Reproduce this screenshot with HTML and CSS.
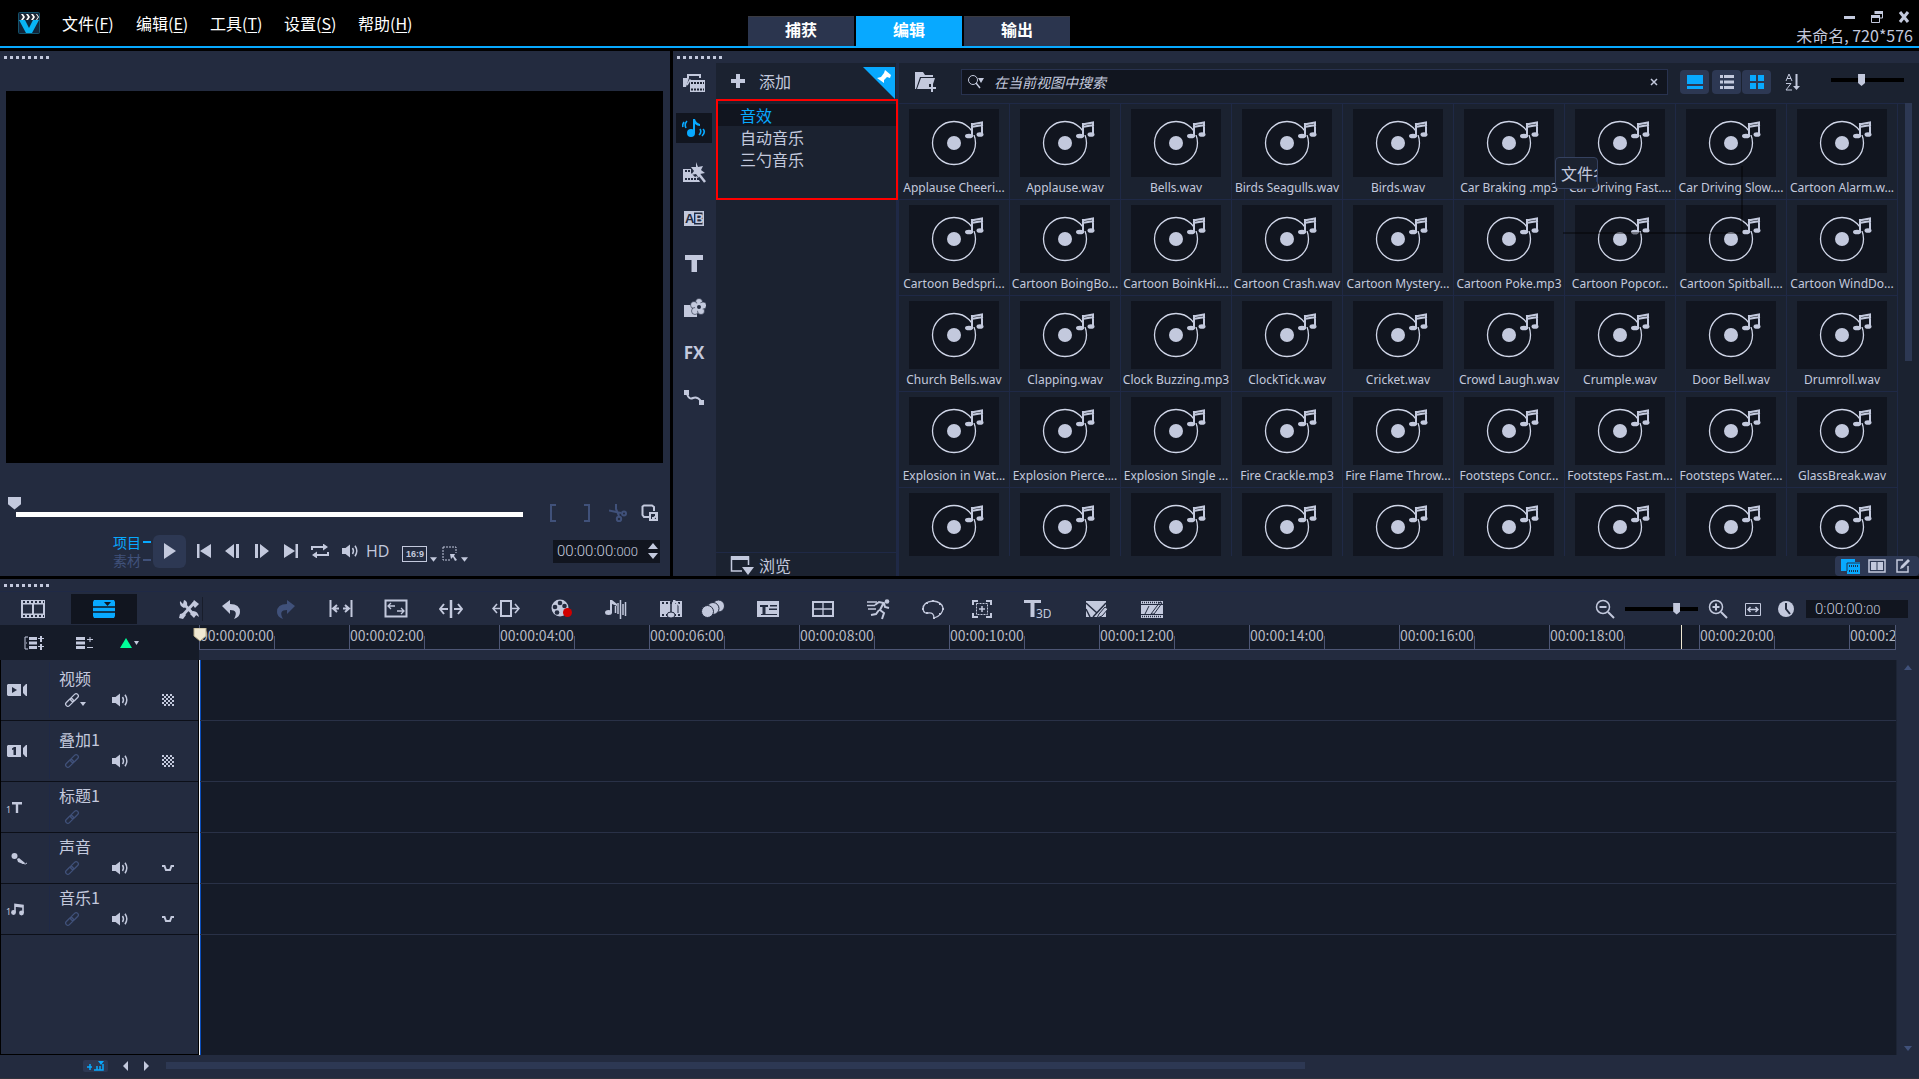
FILE: index.html
```html
<!DOCTYPE html>
<html lang="zh-CN">
<head>
<meta charset="utf-8">
<meta name="viewport" content="width=device-width, initial-scale=1">
<title>未命名, 720*576</title>
<link rel="stylesheet" href="styles.css">
</head>
<body>
<svg class="sprite" aria-hidden="true">
  <symbol id="disc" viewBox="0 0 90 68"><circle cx="45" cy="34" r="21.500" fill="none" stroke="#d0d6e8" stroke-width="1.300"/><circle cx="45" cy="34" r="7"/><path d="M64 18h8v8h-8z" fill="#11151f"/><path d="M62 15.500 73 13.500V26M63 14V28M62 18 74 16" fill="none" stroke="currentColor" stroke-width="2"/><ellipse cx="60" cy="27" rx="4" ry="2.300"/><ellipse cx="71" cy="25.500" rx="3.500" ry="2.300"/></symbol>
  <symbol id="link" viewBox="0 0 16 16"><g fill="none" stroke="currentColor" stroke-width="1.300" transform="rotate(-45 8 8)"><rect x="0" y="5.800" width="9" height="4.400" rx="2.200"/><rect x="7" y="5.800" width="9" height="4.400" rx="2.200"/></g></symbol>
  <symbol id="volume" viewBox="0 0 20 16"><path d="M2 5h3.500L10 1.500v13L5.500 11H2z"/><path d="M12.500 5q2 3 0 6M15 2.800q3.600 5.200 0 10.400" fill="none" stroke="currentColor" stroke-width="1.500"/></symbol>
  <symbol id="checker" viewBox="0 0 12 12"><path d="M0 0h2v2H0zM4 0h2v2H4zM8 0h2v2H8zM2 2h2v2H2zM6 2h2v2H6zM10 2h2v2h-2zM0 4h2v2H0zM4 4h2v2H4zM8 4h2v2H8zM2 6h2v2H2zM6 6h2v2H6zM10 6h2v2h-2zM0 8h2v2H0zM4 8h2v2H4zM8 8h2v2H8zM2 10h2v2H2zM6 10h2v2H6zM10 10h2v2h-2z"/></symbol>
  <symbol id="duck" viewBox="0 0 12 12"><path d="M0 4h2.500l1.500 4h4l1.500-4H12" fill="none" stroke="currentColor" stroke-width="2"/></symbol>
  <symbol id="caret" viewBox="0 0 6 4"><path d="M0 0h6L3 4z"/></symbol>
</svg>

<div class="app">
  <header class="topbar">
    <svg class="logo" viewBox="0 0 22 22" aria-hidden="true"><rect x=".5" y=".5" width="21" height="21" rx="1" fill="#10253a" stroke="#14526b"/><path d="M2 2h18v6H2z" fill="#222a35"/><path d="m3 2 2 3-2 3h2l2-3-2-3zM8 2l2 3-2 3h2l2-3-2-3zM13 2l2 3-2 3h2l2-3-2-3zM18 2l2 3-2 3h1l2-3-2-3z" fill="#fff"/><path d="M1 8h6l4 8 4-8h6l-7 13H8z" fill="#08b4f5"/></svg>
    <nav class="menu">
      <a href="#">文件(<u>F</u>)</a><a href="#">编辑(<u>E</u>)</a><a href="#">工具(<u>T</u>)</a><a href="#">设置(<u>S</u>)</a><a href="#">帮助(<u>H</u>)</a>
    </nav>
    <div class="tabs">
      <button>捕获</button><button class="on">编辑</button><button>输出</button>
    </div>
    <div class="window">
      <div class="window-buttons">
        <button aria-label="最小化"><svg viewBox="0 0 12 12"><path d="M0 5h11v3H0z"/></svg></button>
        <button aria-label="还原"><svg viewBox="0 0 12 12"><path d="M4 1.500h7.500V7H9" fill="none" stroke="currentColor"/><path d="M3.500 0H12v3H3.500zM0 4h9v3H0z"/><path d="M.500 5h8v6.500h-8z" fill="none" stroke="currentColor"/></svg></button>
        <button aria-label="关闭"><svg viewBox="0 0 12 12"><path d="m2 1 8 10M10 1 2 11" stroke="currentColor" stroke-width="3"/></svg></button>
      </div>
      <span>未命名, 720*576</span>
    </div>
  </header>

  <main class="upper">
    <section class="preview">
      <div class="grip"></div>
      <div class="screen"></div>
      <div class="seek">
        <input type="range" min="0" max="100" value="0" aria-label="播放位置">
        <div class="trim">
          <button aria-label="开始标记"><svg class="dim" viewBox="0 0 18 18"><path d="M11 1H6v16h5" fill="none" stroke="currentColor" stroke-width="2"/></svg></button>
          <button aria-label="结束标记"><svg class="dim" viewBox="0 0 18 18"><path d="M7 1h5v16H7" fill="none" stroke="currentColor" stroke-width="2"/></svg></button>
          <button aria-label="分割"><svg class="dim" viewBox="0 0 18 18"><g fill="none" stroke="currentColor" stroke-width="2"><path d="M7 0v5l3 7M0 6.500l12 2.500"/><circle cx="15" cy="9.500" r="2"/><circle cx="10" cy="15" r="2.200"/></g></svg></button>
          <button aria-label="放大预览"><svg viewBox="0 0 18 18"><path d="M8 13H3L1.500 11V2.500L3 1.500h8L13 3v4" fill="none" stroke="currentColor" stroke-width="2"/><path d="M9 9h7v7H9zM11 14h2l2-2v-2" fill="none" stroke="currentColor" stroke-width="2"/></svg></button>
        </div>
      </div>
      <div class="transport">
        <div class="mode"><button class="on">项目<i></i></button><button>素材<i></i></button></div>
        <button class="play" aria-label="播放"><svg viewBox="0 0 14 18"><path d="M1 1v16l12-8z"/></svg></button>
        <div class="steps">
          <button aria-label="起始"><svg viewBox="0 0 18 14"><path d="M2 0h2.500v14H2zM16 0v14L5 7z"/></svg></button>
          <button aria-label="上一帧"><svg viewBox="0 0 18 14"><path d="M10 0v14L1 7zM12 0h3v14h-3z"/></svg></button>
          <button aria-label="下一帧"><svg viewBox="0 0 18 14"><path d="M7 0v14l9-7zM2 0h3v14H2z"/></svg></button>
          <button aria-label="结束"><svg viewBox="0 0 18 14"><path d="M13.500 0H16v14h-2.500zM2 0v14l11-7z"/></svg></button>
          <button aria-label="重复"><svg viewBox="0 0 18 14"><path d="M1 6V3h12M17 8v3H5" fill="none" stroke="currentColor" stroke-width="2"/><path d="m12-.500 5 3.500-5 3.500zM6 7.500 1 11l5 3.500z"/></svg></button>
          <button aria-label="音量"><svg viewBox="0 0 20 16"><use href="#volume"/></svg></button>
        </div>
        <button class="hd">HD</button>
        <button class="ratio"><b>16:9</b><svg><use href="#caret"/></svg></button>
        <button class="pick" aria-label="变形"><svg viewBox="0 0 16 16"><path d="M1 1h13v6M1 1v13h7" fill="none" stroke="currentColor" stroke-dasharray="2 1"/><path d="M8 8h5l-1 2 3 4-2 1-2-4-2 2z"/></svg><svg><use href="#caret"/></svg></button>
        <div class="clock"><output>00:00:00:<small>000</small></output><svg viewBox="0 0 10 18"><path d="M0 7h10L5 1zM0 11h10l-5 6z"/></svg></div>
      </div>
    </section>

    <section class="library">
      <div class="grip"></div>
      <div class="library-body">
        <nav class="rail">
          <button aria-label="媒体"><svg viewBox="0 0 24 24"><path d="M5 3h14v4h-2V5H7v2L4 16H1V7h4z"/><path d="M5 14l3-5 3 2" fill="none" stroke="currentColor" stroke-width="1.500"/><path d="M8 9h15v12H8z"/><path d="M9 12h13M9 18.500h13" stroke="#1c2231" stroke-width="2" stroke-dasharray="2 1"/></svg></button>
          <button class="on" aria-label="声音"><svg viewBox="0 0 24 24"><path d="M11 3h2q1 4 5 5v2q-3 0-5-2v9h-2z"/><circle cx="9" cy="17" r="4"/><path d="M5 5q-3 3-1 7M2 6q-2 3-1 5M18 13q2 3-1 6M21 13q3 3-1 7" fill="none" stroke="currentColor" stroke-width="1.600"/></svg></button>
          <button aria-label="即时项目"><svg viewBox="0 0 24 24"><path d="M1 8h8v4l4 4 2-1 3 6H1z"/><path d="M3 10h6M3 18h14" stroke="#232b3f" stroke-width="2" stroke-dasharray="2 1"/><path d="m14 1 2 5 5-1-2 4 4 3-5 1-1 4-3-4-5 1 3-4-3-4 5 0z"/><path d="m16 12 7 9" stroke="currentColor" stroke-width="2.500"/></svg></button>
          <button aria-label="转场"><svg viewBox="0 0 24 24"><path d="M2 5h20v15H2z"/><path d="M12 6.500h8.500v12H12z" fill="#232b3f"/><text x="3" y="17" fill="#232b3f">A</text><text x="12.500" y="17">B</text></svg></button>
          <button aria-label="标题"><svg viewBox="0 0 24 24"><path d="M3 4h18v5h-6v12H9.500V9H3z"/></svg></button>
          <button aria-label="覆叠"><svg viewBox="0 0 24 24"><path d="M2 9h8v12H2zM8 17h7v4H8z"/><g stroke="#232b3f" stroke-width=".600"><circle cx="17" cy="6" r="3.500"/><circle cx="12" cy="9" r="3.500"/><circle cx="13" cy="15" r="3.500"/><circle cx="19" cy="15" r="3.500"/><circle cx="21" cy="9.500" r="3.500"/></g><circle cx="17" cy="11" r="4"/><circle cx="17" cy="11" r="2" fill="#232b3f"/></svg></button>
          <button class="fx">FX</button>
          <button aria-label="路径"><svg viewBox="0 0 24 24"><path d="M2 4h5v5H2zM17 14h5v5h-5z"/><path d="M5 8q2 6 6 4t8 3" fill="none" stroke="currentColor" stroke-width="2"/></svg></button>
        </nav>
        <aside class="folders">
          <div class="add">
            <button><svg viewBox="0 0 14 14"><path d="M5 0h4v5h5v4H9v5H5V9H0V5h5z"/></svg>添加</button>
            <svg class="pin" viewBox="0 0 32 32" aria-hidden="true"><path d="M0 0h32v32z" fill="#08a9ff"/><path d="m22 3 6 5-1 3-3-1-3 3v3l-7-5 4-1 3-4z" fill="#fff"/></svg>
          </div>
          <ul>
            <li class="on"><a href="#">音效</a></li><li><a href="#">自动音乐</a></li><li><a href="#">三勺音乐</a></li>
          </ul>
          <button class="browse"><svg viewBox="0 0 24 20"><path d="M12 16H1.500V2h17v8" fill="none" stroke="currentColor" stroke-width="1.500"/><path d="M1 1h18v4H1zM12 12h12l-6 8z"/></svg>浏览</button>
        </aside>
        <div class="content">
          <div class="filter">
            <button class="import" aria-label="导入"><svg viewBox="0 0 24 22"><path d="M1 1h8l2 3h8v2H6L2 18H1z"/><path d="M7 7h14l-2 6h-4v5H3z"/><path d="M18 13v8M14 17h8" stroke="currentColor" stroke-width="2"/></svg></button>
            <div class="search">
              <svg viewBox="0 0 18 16"><circle cx="6" cy="6" r="4.500" fill="none" stroke="currentColor"/><path d="m9 9 4 5" stroke="currentColor" stroke-width="1.500"/><path d="M11 4h6l-3 5z"/></svg>
              <input type="text" placeholder="在当前视图中搜索" aria-label="搜索">
              <button aria-label="清除"><svg viewBox="0 0 8 8"><path d="m1 1 6 6M7 1 1 7" stroke="currentColor" stroke-width="1.500"/></svg></button>
            </div>
            <div class="views">
              <button aria-label="显示"><svg viewBox="0 0 16 14"><path d="M0 0h16v9H0zM0 11h16v3H0z" fill="#08a9ff"/></svg></button>
              <div class="pair">
                <button aria-label="列表视图"><svg viewBox="0 0 16 14"><path d="M1 0h3v3H1zM5 0h10v3H5zM1 5.500h3v3H1zM5 5.500h10v3H5zM1 11h3v3H1zM5 11h10v3H5z"/></svg></button><button aria-label="缩略图视图"><svg viewBox="0 0 16 14"><path d="M1 0h6v6H1zM9 0h6v6H9zM1 8h6v6H1zM9 8h6v6H9z" fill="#08a9ff"/></svg></button>
              </div>
            </div>
            <button class="sort" aria-label="排序"><svg viewBox="0 0 16 18"><path d="m1 8 3-7 3 7M2 5.500h4M1 10.500h5L1 17h6" fill="none" stroke="currentColor"/><path d="M10.500 1h2v12h2.500l-3.500 4L8 13h2.500z"/></svg></button>
            <input class="mini" type="range" min="0" max="100" value="41" aria-label="缩略图大小">
          </div>
          <div class="gallery">
            <ul>
              <li><svg><use href="#disc"/></svg>Applause Cheeri...</li><li><svg><use href="#disc"/></svg>Applause.wav</li><li><svg><use href="#disc"/></svg>Bells.wav</li><li><svg><use href="#disc"/></svg>Birds Seagulls.wav</li><li><svg><use href="#disc"/></svg>Birds.wav</li><li><svg><use href="#disc"/></svg>Car Braking .mp3</li><li><svg><use href="#disc"/></svg>Car Driving Fast....</li><li><svg><use href="#disc"/></svg>Car Driving Slow....</li><li><svg><use href="#disc"/></svg>Cartoon Alarm.w...</li>
              <li><svg><use href="#disc"/></svg>Cartoon Bedspri...</li><li><svg><use href="#disc"/></svg>Cartoon BoingBo...</li><li><svg><use href="#disc"/></svg>Cartoon BoinkHi....</li><li><svg><use href="#disc"/></svg>Cartoon Crash.wav</li><li><svg><use href="#disc"/></svg>Cartoon Mystery...</li><li><svg><use href="#disc"/></svg>Cartoon Poke.mp3</li><li><svg><use href="#disc"/></svg>Cartoon Popcor...</li><li><svg><use href="#disc"/></svg>Cartoon Spitball....</li><li><svg><use href="#disc"/></svg>Cartoon WindDo...</li>
              <li><svg><use href="#disc"/></svg>Church Bells.wav</li><li><svg><use href="#disc"/></svg>Clapping.wav</li><li><svg><use href="#disc"/></svg>Clock Buzzing.mp3</li><li><svg><use href="#disc"/></svg>ClockTick.wav</li><li><svg><use href="#disc"/></svg>Cricket.wav</li><li><svg><use href="#disc"/></svg>Crowd Laugh.wav</li><li><svg><use href="#disc"/></svg>Crumple.wav</li><li><svg><use href="#disc"/></svg>Door Bell.wav</li><li><svg><use href="#disc"/></svg>Drumroll.wav</li>
              <li><svg><use href="#disc"/></svg>Explosion in Wat...</li><li><svg><use href="#disc"/></svg>Explosion Pierce....</li><li><svg><use href="#disc"/></svg>Explosion Single ...</li><li><svg><use href="#disc"/></svg>Fire Crackle.mp3</li><li><svg><use href="#disc"/></svg>Fire Flame Throw...</li><li><svg><use href="#disc"/></svg>Footsteps Concr...</li><li><svg><use href="#disc"/></svg>Footsteps Fast.m...</li><li><svg><use href="#disc"/></svg>Footsteps Water....</li><li><svg><use href="#disc"/></svg>GlassBreak.wav</li>
              <li><svg><use href="#disc"/></svg></li><li><svg><use href="#disc"/></svg></li><li><svg><use href="#disc"/></svg></li><li><svg><use href="#disc"/></svg></li><li><svg><use href="#disc"/></svg></li><li><svg><use href="#disc"/></svg></li><li><svg><use href="#disc"/></svg></li><li><svg><use href="#disc"/></svg></li><li><svg><use href="#disc"/></svg></li>
            </ul>
            <div class="vbar"></div>
            <div class="tip-shadow"></div>
            <div class="tip">文件名</div>
          </div>
          <div class="panels">
            <button aria-label="素材库"><svg viewBox="0 0 20 16"><path d="M0 1h14v3h5v12H6v-3H0z" fill="#08a9ff"/><path d="M6 13V5h13" fill="none" stroke="#1c3450"/><path d="M8 8h10M8 13h10" stroke="#1c3450" stroke-width="2" stroke-dasharray="1 1"/></svg></button>
            <button aria-label="选项"><svg viewBox="0 0 18 16"><path d="M1 2h16v12H1z" fill="none" stroke="currentColor" stroke-width="1.500"/><path d="M3 4h5.500v8H3zM9.500 4H15v8H9.500z"/></svg></button>
            <button aria-label="编辑"><svg viewBox="0 0 16 16"><path d="M8 2H2v12h11V8" fill="none" stroke="currentColor" stroke-width="1.500"/><path d="m5 11 1-3 7-7 2 2-7 7z"/></svg></button>
          </div>
        </div>
      </div>
    </section>
  </main>

  <section class="timeline">
    <div class="grip"></div>
    <div class="toolbar">
      <div class="mode-switch">
        <button aria-label="故事板视图"><svg viewBox="0 0 24 18"><path d="M0 0h24v18H0z"/><path d="M2 4.500h9v9H2zM13 4.500h9v9h-9z" fill="#232b3f"/><path d="M2 2h21M2 16h21" stroke="#232b3f" stroke-width="2" stroke-dasharray="2 2"/></svg></button>
        <button class="on" aria-label="时间轴视图"><svg viewBox="0 0 24 18"><path d="M2 0h20l1 2v14l-1 2H2l-1-2V2z" fill="#08a9ff"/><path d="M1 7h22M1 12h22" stroke="#11151f" stroke-width="1.500"/><path d="M12 2h7l-3.500 4z" fill="#11151f"/></svg></button>
      </div>
      <div class="tools">
        <button class="setup" aria-label="自定义工具栏"><svg viewBox="0 0 24 24"><path d="m5 19 12-13M7 7l11 12" stroke="currentColor" stroke-width="3"/><path d="M3 4l3 3 1-4q4 1 3 6L7 11Q2 9 3 4zM17 3l5 4-4 4-3-4zM16 14q5 0 6 6l-3-2-2 3-4-4zM3 17l4-1 2 2-3 4-4-1z"/></svg></button>
        <button class="near" aria-label="撤消"><svg viewBox="0 0 24 24"><path d="m3 9 8-6v4q10 0 10 8 0 5-6 7 5-9-4-9v4z"/></svg></button>
        <button aria-label="重复"><svg class="dim" viewBox="0 0 24 24"><path d="m21 9-8-6v4Q3 7 3 15q0 5 6 7-5-9 4-9v4z"/></svg></button>
        <button aria-label="滑动"><svg viewBox="0 0 24 24"><path d="M1.500 3v17M22.500 3v17M4 11.500h6M14 11.500h6M8 8l-4 3.500L8 15M16 8l4 3.500-4 3.500" fill="none" stroke="currentColor" stroke-width="2"/></svg></button>
        <button aria-label="拉伸"><svg viewBox="0 0 24 24"><path d="M1.500 3.500h21v16h-21z" fill="none" stroke="currentColor" stroke-width="2"/><path d="M11 9H4M7 6 4 9l3 3M13 14h7M17 11l3 3-3 3" fill="none" stroke="currentColor" stroke-width="1.300"/></svg></button>
        <button aria-label="卷动"><svg viewBox="0 0 24 24"><path d="M12 3v18" stroke="currentColor" stroke-width="2.500"/><path d="M9 12H1M5 7l-4 5 4 5M15 12h8M19 7l4 5-4 5" fill="none" stroke="currentColor" stroke-width="2"/></svg></button>
        <button aria-label="滑动素材"><svg viewBox="0 0 28 24"><path d="M9 4h10v15H9z" fill="none" stroke="currentColor" stroke-width="2"/><path d="M8 11.500H1M5 7l-4 4.500L5 16M20 11.500h7M23 7l4 4.500-4 4.500" fill="none" stroke="currentColor" stroke-width="1.600"/></svg></button>
        <button aria-label="录制/捕获"><svg viewBox="0 0 24 24"><circle cx="11" cy="11" r="8.500"/><g fill="#232b3f"><circle cx="11" cy="6" r="2.300"/><circle cx="6" cy="10" r="2.300"/><circle cx="8" cy="15.500" r="2.300"/><circle cx="15.500" cy="9" r="2.300"/></g><circle cx="18.500" cy="15.500" r="4.500" fill="#d00000"/></svg></button>
        <button aria-label="混音器"><svg viewBox="0 0 24 24"><path d="M6 3h2l5 4v2L8 7v9H6z"/><ellipse cx="4.500" cy="15.500" rx="3.500" ry="2.500"/><path d="M11.500 9v7M14 6v11M16.500 3v19M19 7v11M21.500 5v14" stroke="currentColor" stroke-width="1.500"/></svg></button>
        <button aria-label="自动音乐"><svg viewBox="0 0 24 24"><path d="M1 4h22v16H1z"/><path d="M3 6h19M3 18h19" stroke="#232b3f" stroke-width="2" stroke-dasharray="2 2"/><path d="M12 16V4l7 3v9M12 4v12" fill="none" stroke="#232b3f"/><path d="M14 3h2l4 4v2l-4-3v12h-2z"/><ellipse cx="12" cy="18" rx="4" ry="3" stroke="#232b3f"/></svg></button>
        <button class="near" aria-label="运动追踪"><svg viewBox="0 0 24 24"><g stroke="#232b3f"><circle cx="17.500" cy="9" r="6"/><circle cx="12" cy="11.500" r="6"/><circle cx="6.500" cy="14.500" r="6"/></g></svg></button>
        <button aria-label="字幕编辑器"><svg viewBox="0 0 24 24"><path d="M1 4h22v16H1z"/><path d="M4 8h8v2H9.500v7h-3v-7H4zM14 8h7v1.500h-7zM13 11.500h8V13h-8zM5 17h16v1H5z" fill="#232b3f"/></svg></button>
        <button aria-label="多相机"><svg viewBox="0 0 24 24"><path d="M2 5h20v14H2z" fill="none" stroke="currentColor" stroke-width="2"/><path d="M12 4v16M1 12h22" stroke="currentColor" stroke-width="1.300"/></svg></button>
        <button aria-label="重新映射时间"><svg viewBox="0 0 24 24"><path d="M1 5h10M1 8.500h8M2 12h8" fill="none" stroke="currentColor" stroke-width="1.600"/><path d="m9 8 4-3 5 1 1 4 4 1M17 7l-3 6 4 3-2 6M13 13l-3 4-5 1" fill="none" stroke="currentColor" stroke-width="2"/><circle cx="21" cy="4.500" r="2.300"/></svg></button>
        <button aria-label="遮罩创建器"><svg viewBox="0 0 24 24"><path d="M2 12Q2 5 12 4q9 1 10 7 0 7-9 10 0-6-6-5-4 1-5-4z" fill="none" stroke="currentColor" stroke-width="1.300"/><path d="M11 3h2v2h-2zM5 5h2v2H5zM18 6h2v2h-2zM1 11h2v2H1zM21 11h2v2h-2zM5 15h2v2H5zM18 16h2v2h-2zM12 20h2v2h-2z"/></svg></button>
        <button class="mid" aria-label="摇动和缩放"><svg viewBox="0 0 24 24"><path d="M3 8V4h5M16 4h5v4M21 16v4h-5M8 20H3v-4" fill="none" stroke="currentColor" stroke-width="2"/><path d="M6.500 6.500h11v11h-11z" fill="none" stroke="currentColor" stroke-dasharray="2 1"/><path d="M12 9v6M9 12h6" stroke="currentColor" stroke-width="1.500"/></svg></button>
        <button aria-label="3D标题编辑器"><svg viewBox="0 0 28 24"><path d="M1 3h17v3h-6.500v14h-4V6H1z"/><text class="three" x="13" y="21">3D</text></svg></button>
        <button class="far" aria-label="分屏模板"><svg viewBox="0 0 24 24"><path d="M1 4h20v16H1z"/><path d="m1 6 11 10M8 20l13-14M1 12l4 8" stroke="#232b3f" stroke-width="1.500"/><path d="m12 21 2-4 6-7 3 2-6 7z" stroke="#232b3f"/></svg></button>
        <button aria-label="绘图创建器"><svg viewBox="0 0 24 24"><path d="M1 4h22v17H1z"/><path d="M2 5.500h19M2 19.500h20" stroke="#232b3f" stroke-width="1.500" stroke-dasharray="1 1"/><path d="M1 7.500h22M1 17.500h22M5 17 9 9M11 17l9-12 2 1-8 11z" fill="none" stroke="#232b3f"/></svg></button>
      </div>
      <div class="zoom">
        <button aria-label="缩小"><svg viewBox="0 0 20 20"><circle cx="8" cy="8" r="6.500" fill="none" stroke="currentColor" stroke-width="1.500"/><path d="M4.500 8h7" stroke="currentColor" stroke-width="2"/><path d="m13 13 6 6" stroke="currentColor" stroke-width="2"/></svg></button>
        <input class="mini" type="range" min="0" max="100" value="73" aria-label="缩放">
        <button aria-label="放大"><svg viewBox="0 0 20 20"><circle cx="8" cy="8" r="6.500" fill="none" stroke="currentColor" stroke-width="1.500"/><path d="M4.500 8h7M8 4.500v7" stroke="currentColor" stroke-width="2"/><path d="m13 13 6 6" stroke="currentColor" stroke-width="2"/></svg></button>
        <button class="fit" aria-label="适合窗口"><svg viewBox="0 0 20 20"><path d="M2.500 4.500h15v12h-15z" fill="none" stroke="currentColor"/><path d="M5 10.500h10M7.500 8 5 10.500 7.500 13M12.500 8l2.500 2.500-2.500 2.500" fill="none" stroke="currentColor" stroke-width="1.500"/></svg></button>
        <button aria-label="项目区间"><svg viewBox="0 0 20 20"><circle cx="10" cy="10" r="8"/><path d="M10 4v6l4 5" fill="none" stroke="#232b3f" stroke-width="2"/></svg></button>
        <output>0:00:00:<small>00</small></output>
      </div>
    </div>

    <div class="ruler-row">
      <div class="ruler-tools">
        <button aria-label="显示全部轨道"><svg viewBox="0 0 20 14"><path d="M4 1H1v12h3M2 7h1" fill="none" stroke="currentColor"/><path d="M5 1h8v3H5zM5 5.500h8v3H5zM5 10h8v3H5zM16 0h2v6h-2zM14 2h6v1h-6zM16 8h2v6h-2zM14 10h6v1h-6z"/></svg></button>
        <button aria-label="轨道管理器"><svg viewBox="0 0 20 14"><path d="M2 1h9v3H2zM2 5.500h9v3H2zM2 10h9v3H2zM13 3h6v1h-6zM15.500 1h1v5h-1zM13 11h6v1h-6z"/></svg></button>
        <button aria-label="添加标记"><svg viewBox="0 0 20 14"><path d="M0 12h12L6 2z" fill="#0f9"/><path d="M14 5h5l-2.500 4z"/></svg></button>
      </div>
      <div class="ruler">
        <span>00:00:00:00</span><span>00:00:02:00</span><span>00:00:04:00</span><span>00:00:06:00</span><span>00:00:08:00</span><span>00:00:10:00</span><span>00:00:12:00</span><span>00:00:14:00</span><span>00:00:16:00</span><span>00:00:18:00</span><span>00:00:20:00</span><span>00:00:22:00</span>
        <i class="cursor"></i>
      </div>
      <svg class="flag" viewBox="0 0 14 14" aria-hidden="true"><path d="M1 0h12v8l-6 5-6-5z" fill="#efe8d2" stroke="#b9ad88"/></svg>
    </div>

    <div class="tracks">
      <div class="heads">
        <div class="head tall">
          <svg class="kind" viewBox="0 0 24 16"><path d="M2 2h13v12H2l-1-1V3zM17 5l3-3h1v12h-1l-3-3z"/><path d="m6 5 5 3-5 3z" fill="#232b3f"/></svg>
          <div class="info"><strong>视频</strong><div class="row"><svg class="i-link"><use href="#link"/></svg><svg class="i-caret"><use href="#caret"/></svg><svg class="i-vol"><use href="#volume"/></svg><svg class="i-end"><use href="#checker"/></svg></div></div>
        </div>
        <div class="head tall">
          <svg class="kind" viewBox="0 0 24 16"><path d="M2 2h13v12H2l-1-1V3zM17 5l3-3h1v12h-1l-3-3z"/><path d="M6 5.500 8 4h2v8H7.500V6.500L6 7z" fill="#232b3f"/></svg>
          <div class="info"><strong>叠加1</strong><div class="row"><svg class="i-link dim"><use href="#link"/></svg><svg class="i-vol"><use href="#volume"/></svg><svg class="i-end"><use href="#checker"/></svg></div></div>
        </div>
        <div class="head">
          <svg class="kind" viewBox="0 0 24 16"><text x="0" y="14">1</text><path d="M6 3h10v2.500h-3.800V14H9.800V5.500H6z"/></svg>
          <div class="info"><strong>标题1</strong><div class="row"><svg class="i-link dim"><use href="#link"/></svg></div></div>
        </div>
        <div class="head">
          <svg class="kind" viewBox="0 0 24 16"><circle cx="8.500" cy="6" r="3"/><path d="m11 9 2-1 6 5-2 1-5-2z"/><path d="M16 13q4 2 5 0" fill="none" stroke="currentColor"/></svg>
          <div class="info"><strong>声音</strong><div class="row"><svg class="i-link dim"><use href="#link"/></svg><svg class="i-vol"><use href="#volume"/></svg><svg class="i-end"><use href="#duck"/></svg></div></div>
        </div>
        <div class="head">
          <svg class="kind" viewBox="0 0 24 16"><text x="0" y="14">1</text><path d="M9 11V3.500l8 1V12M9 5l8 1" fill="none" stroke="currentColor" stroke-width="1.600"/><circle cx="7.500" cy="11.500" r="2.400"/><circle cx="15.500" cy="12" r="2.400"/></svg>
          <div class="info"><strong>音乐1</strong><div class="row"><svg class="i-link dim"><use href="#link"/></svg><svg class="i-vol"><use href="#volume"/></svg><svg class="i-end"><use href="#duck"/></svg></div></div>
        </div>
      </div>
      <div class="lanes"><div class="tall"></div><div class="tall"></div><div></div><div></div><div></div></div>
      <div class="gutter"><svg viewBox="0 0 8 5"><path d="M0 5h8L4 0z"/></svg><svg viewBox="0 0 8 5"><path d="M0 0h8L4 5z"/></svg></div>
    </div>

    <div class="footer">
      <button class="goto" aria-label="跳转"><svg viewBox="0 0 18 10"><path d="M0 6h5M3 3v6M7 9h9V3M10 9V5M13 9V5" fill="none" stroke="#08a9ff" stroke-width="1.500"/><path d="M11 0h6l-3 4z" fill="#08a9ff"/></svg></button>
      <button aria-label="左移"><svg viewBox="0 0 6 10"><path d="M6 0v10L1 5z"/></svg></button>
      <button aria-label="右移"><svg viewBox="0 0 6 10"><path d="M0 0v10l5-5z"/></svg></button>
      <div class="hbar"><i></i></div>
    </div>
  </section>
</div>
</body>
</html>
```
FILE: styles.css
```css
:root {
  --panel: #232b3f;
  --library: #1b2230;
  --dark: #11151f;
  --track: #151b28;
  --line: #1f2946;
  --raised: #2d3853;
  --ink: #c3c9dd;
  --dim: #40517a;
  --blue: #08a9ff;
}

* { box-sizing: border-box; }

body {
  margin: 0;
  background: #000;
  color: var(--ink);
  font: 16px/22px "Noto Sans CJK SC", sans-serif;
}

button {
  display: flex;
  align-items: center;
  justify-content: center;
  margin: 0;
  padding: 0;
  border: 0;
  background: none;
  color: inherit;
  font: inherit;
}

a { color: inherit; text-decoration: none; }
ul { margin: 0; padding: 0; list-style: none; }
svg { display: block; flex: none; fill: currentColor; }
.sprite { position: absolute; width: 0; height: 0; }
.dim { color: var(--dim); }

.app {
  display: grid;
  grid-template-columns: minmax(0, 1fr);
  grid-template-rows: auto minmax(0, 525fr) minmax(0, 500fr);
  gap: 3px;
  height: 100vh;
}

/* Title bar */
.topbar {
  display: grid;
  grid-template-columns: 18px 30px minmax(0, 700fr) auto minmax(0, 849fr);
  height: 48px;
  border-bottom: 2px solid var(--blue);
}
.logo { grid-column: 2; width: 22px; height: 22px; margin-top: 12px; }
.menu { display: flex; padding: 12px 0 0 14px; color: #fff; }
.menu a { width: 74px; height: 22px; white-space: nowrap; }
.menu u { text-underline-offset: 2px; }
.tabs { display: flex; gap: 2px; padding-top: 16px; }
.tabs button {
  width: 106px;
  padding-bottom: 6px;
  border-top: 1px solid #3a3a40;
  background: #2b354e;
  color: #fff;
  font-weight: 700;
}
.tabs .on { background: var(--blue); border-color: var(--blue); }
.window { display: flex; flex-direction: column; align-items: flex-end; padding: 11px 6px 0 0; white-space: nowrap; }
.window-buttons { display: flex; gap: 15px; margin: 0 3px 1px 0; }
.window-buttons svg { width: 12px; height: 12px; }

/* Panels */
.upper { display: grid; grid-template-columns: minmax(0, 670fr) minmax(0, 1246fr); gap: 3px; min-height: 0; }
.grip {
  height: 12px;
  flex: none;
  background: repeating-linear-gradient(90deg, var(--ink) 0 3px, transparent 3px 6px) 4px 5px / 45px 3px no-repeat;
}

/* Preview */
.preview { display: flex; flex-direction: column; background: var(--panel); }
.screen { flex: 1; margin: 28px 7px 0 6px; background: #000; }
.seek { display: flex; justify-content: space-between; padding: 33px 11px 0 8px; }
.seek input {
  flex: 1;
  height: 22px;
  margin: 0;
  appearance: none;
  background: linear-gradient(#fff, #fff) 8px 16px / 100% 5px no-repeat;
}
.seek input::-webkit-slider-thumb {
  appearance: none;
  width: 13px;
  height: 13px;
  margin-bottom: 8px;
  background: var(--ink);
  clip-path: polygon(0 0, 100% 0, 100% 60%, 50% 100%, 0 60%);
}
.trim { display: flex; gap: 14px; margin-left: 22px; padding-top: 8px; }
.trim svg { width: 18px; height: 18px; }
.trim button { height: 18px; }
.transport { display: flex; align-items: center; height: 50px; padding: 0 10px 0 113px; margin: 4px 0 0; }
.mode { font-size: 14px; }
.mode button { height: 18px; gap: 2px; color: var(--dim); line-height: 18px; }
.mode .on { color: var(--blue); }
.mode i { width: 8px; height: 2px; background: currentColor; }
.play { width: 33px; height: 33px; margin-left: 2px; border-radius: 6px; background: var(--raised); }
.play svg { width: 14px; height: 18px; }
.steps { display: flex; align-items: center; gap: 11px; margin-left: 9px; }
.steps svg { width: 18px; height: 14px; }
.steps button:last-child svg { width: 20px; height: 16px; }
.hd { margin-left: 6px; font: 16px/22px "Open Sans", sans-serif; }
.ratio, .pick { align-items: flex-end; gap: 3px; margin-top: 6px; }
.ratio { margin-left: 13px; }
.pick { margin-left: 5px; }
.ratio b { border: 1px solid var(--ink); width: 25px; font: 700 9px/14px "Liberation Sans", sans-serif; }
.ratio svg, .pick svg:last-child { width: 7px; height: 5px; }
.pick svg { width: 16px; height: 16px; }
.clock { display: flex; align-items: center; justify-content: space-between; width: 107px; height: 23px; margin-left: auto; padding: 0 2px 0 4px; background: var(--dark); }
.clock svg { width: 10px; height: 18px; }
output { font: 300 15px/18px Roboto, sans-serif; }
output small { font-size: 13px; }

/* Library */
.library { display: flex; flex-direction: column; min-height: 0; background: var(--panel); }
.library-body { display: grid; grid-template-columns: 43px 183px minmax(0, 1fr); flex: 1; min-height: 0; }
.rail { display: flex; flex-direction: column; gap: 15px; padding: 5px 0 0 3px; }
.rail button { width: 36px; height: 30px; }
.rail .on { background: var(--dark); color: var(--blue); }
.rail svg { width: 24px; height: 24px; }
.rail text { font: 700 13px "Liberation Sans", sans-serif; }
.rail .fx { font: 700 17px/20px "Open Sans", sans-serif; }
.folders { display: flex; flex-direction: column; border-right: 3px solid var(--line); background: var(--library); }
.add { display: flex; justify-content: space-between; height: 36px; padding: 4px 1px 0 15px; }
.add button { gap: 14px; height: 28px; }
.add button svg { width: 14px; height: 14px; }
.pin { width: 32px; height: 32px; }
.folders ul { height: 101px; margin-right: -2px; padding-top: 3px; border: 2px solid #f00; }
.folders li { padding-left: 22px; }
.folders .on { background: var(--dark); color: var(--blue); }
.browse { justify-content: flex-start; gap: 5px; height: 24px; margin-top: auto; padding-left: 14px; border-top: 1px solid var(--line); }
.browse svg { width: 24px; height: 20px; }
.content { display: flex; flex-direction: column; min-width: 0; min-height: 0; background: var(--library); }
.filter { display: flex; align-items: center; flex: none; height: 40px; padding: 0 15px 2px 15px; }
.import svg { width: 24px; height: 22px; }
.search { display: flex; align-items: center; flex: 1; height: 26px; margin: 0 12px 0 23px; padding: 0 9px 0 5px; border: 1px solid #28324f; background: var(--dark); }
.search svg { width: 18px; height: 16px; }
.search button svg { width: 8px; height: 8px; }
.search input { flex: 1; min-width: 0; margin-left: 9px; padding: 0; border: 0; background: none; color: var(--ink); font: italic 14px/20px "Noto Sans CJK SC", sans-serif; }
.search input::placeholder { color: var(--ink); opacity: 1; }
.views { display: flex; gap: 3px; }
.views button { width: 29px; height: 24px; border-radius: 4px; background: var(--raised); }
.views svg { width: 16px; height: 14px; }
.pair { display: flex; gap: 1px; }
.sort { margin: 0 30px 0 14px; }
.sort svg { width: 16px; height: 18px; }
.mini { width: 73px; height: 12px; margin: 0; appearance: none; background: linear-gradient(#000, #000) 0 4px / 100% 4px no-repeat; }
.filter .mini { margin-bottom: 4px; }
.mini::-webkit-slider-thumb { appearance: none; width: 7px; height: 12px; background: var(--ink); clip-path: polygon(0 0, 100% 0, 100% 75%, 50% 100%, 0 75%); }
.gallery { position: relative; display: flex; justify-content: space-between; flex: 1; min-height: 0; padding-right: 7px; }
.gallery ul { display: grid; grid-template-columns: repeat(auto-fill, 111px); grid-auto-rows: 96px; flex: 1; height: 100%; overflow: hidden; border-top: 1px solid var(--line); }
.gallery li { display: flex; flex-direction: column; align-items: center; padding-top: 5px; border: solid var(--line); border-width: 0 1px 1px 0; font: 12px/22px "Noto Sans", sans-serif; white-space: nowrap; }
.gallery li svg { width: 90px; height: 68px; background: var(--dark); }
.vbar { width: 7px; height: 57%; background: var(--raised); }
.tip { position: absolute; left: 656px; top: 54px; width: 43px; height: 32px; padding: 4px 0 0 5px; overflow: hidden; border: 1px solid #35415f; border-radius: 4px; background: var(--library); white-space: nowrap; }
.tip-shadow { position: absolute; left: 664px; top: 63px; width: 180px; height: 68px; border: solid rgba(0, 0, 0, .4); border-width: 0 2px 2px 0; }
.panels { display: flex; justify-content: space-between; align-self: flex-end; flex: none; width: 84px; height: 20px; padding: 0 6px; border-radius: 4px; background: var(--raised); }
.panels svg { width: 20px; height: 16px; }

/* Timeline */
.timeline { display: flex; flex-direction: column; min-height: 0; background: var(--panel); }
.toolbar { display: flex; align-items: center; height: 34px; flex: none; padding-right: 11px; border-top: 1px solid var(--line); }
.mode-switch { display: flex; gap: 5px; }
.mode-switch button { width: 66px; height: 30px; }
.mode-switch .on { background: var(--dark); }
.mode-switch svg { width: 24px; height: 18px; }
.tools { display: flex; gap: 27px; margin-left: 38px; }
.tools button { width: 28px; height: 24px; }
.tools svg { width: 24px; height: 24px; }
.tools svg[viewBox^="0 0 28"] { width: 28px; }
.tools .setup { border-right: 1px solid #181d2b; }
.tools .near { margin-left: -13px; }
.tools .mid { margin-left: -6px; }
.tools .far { margin-left: 5px; }
.three { font: 12px "Noto Sans", sans-serif; }
.zoom { display: flex; align-items: center; gap: 10px; margin-left: auto; }
.zoom svg { width: 20px; height: 20px; }
.zoom .fit { margin: 0 3px 0 5px; }
.zoom output { width: 102px; height: 18px; padding-left: 9px; background: var(--dark); }

.ruler-row { position: relative; display: flex; height: 35px; flex: none; background: var(--panel); }
.ruler-tools { display: flex; align-items: center; gap: 30px; flex: none; width: 199px; padding-left: 24px; background: var(--track); }
.ruler-tools svg { width: 20px; height: 14px; }
.ruler-tools button:last-child { margin-left: -4px; }
.ruler {
  position: relative;
  display: flex;
  flex: 1;
  min-width: 0;
  height: 25px;
  margin-right: 23px;
  overflow: hidden;
  border-bottom: 1px solid #4d5675;
  background: var(--track);
}
.ruler::after { content: ""; position: absolute; right: 0; top: 0; width: 1px; height: 25px; background: #4d5675; }
.ruler span {
  flex: 0 0 150px;
  border-left: 1px solid #4d5675;
  background: linear-gradient(#4d5675, #4d5675) 74px 11px / 1px 14px no-repeat;
  font-size: 14px;
  line-height: 20px;
  color: #b5b9c4;
}
.cursor { position: absolute; left: 1482px; top: 0; width: 1px; height: 24px; background: #efe8d2; }
.flag { position: absolute; left: 193px; top: 3px; width: 14px; height: 14px; }

.tracks { display: grid; grid-template-columns: 199px minmax(0, 1fr) 23px; flex: 1; min-height: 0; }
.heads { border: 1px solid #000; border-top: 0; }
.head { display: flex; height: 51px; border-bottom: 1px solid #0c0f18; }
.head.tall { height: 61px; }
.kind { align-self: center; width: 24px; height: 16px; margin: 0 19px 0 5px; }
.kind text { font: 9px "Noto Sans", sans-serif; }
.info { flex: 1; margin: 2px 0; padding-left: 9px; border-left: 1px solid var(--line); }
.tall .info { padding-top: 5px; }
.info strong { display: block; font-weight: 400; }
.row { display: flex; align-items: center; height: 22px; padding-left: 5px; }
.i-link { width: 16px; height: 16px; }
.i-caret { width: 6px; height: 4px; margin: 8px -6px 0 0; }
.i-vol { width: 20px; height: 16px; margin-left: 30px; }
.i-end { width: 12px; height: 12px; margin-left: 32px; }
.lanes { border-left: 1px solid #f2f2f2; background: var(--track); box-shadow: inset 1px 0 #0a4dbb; }
.lanes div { height: 51px; border-bottom: 1px solid #293147; }
.lanes .tall { height: 61px; }
.gutter { display: flex; flex-direction: column; align-items: center; justify-content: space-between; padding: 5px 0 4px; border-left: 1px solid #1c2435; color: var(--dim); }
.gutter svg { width: 8px; height: 5px; }

.footer { display: flex; align-items: center; height: 24px; flex: none; padding: 0 0 2px 83px; border-bottom: 1px solid #30323c; }
.footer .goto { width: 25px; height: 12px; margin-right: 14px; border-radius: 2px; background: var(--raised); }
.footer svg { width: 6px; height: 10px; }
.footer .goto svg { width: 18px; height: 10px; }
.footer button + button + button { margin-left: 16px; }
.hbar { flex: 1; margin-left: 16px; }
.hbar i { display: block; width: 65%; height: 7px; background: var(--raised); }
```
